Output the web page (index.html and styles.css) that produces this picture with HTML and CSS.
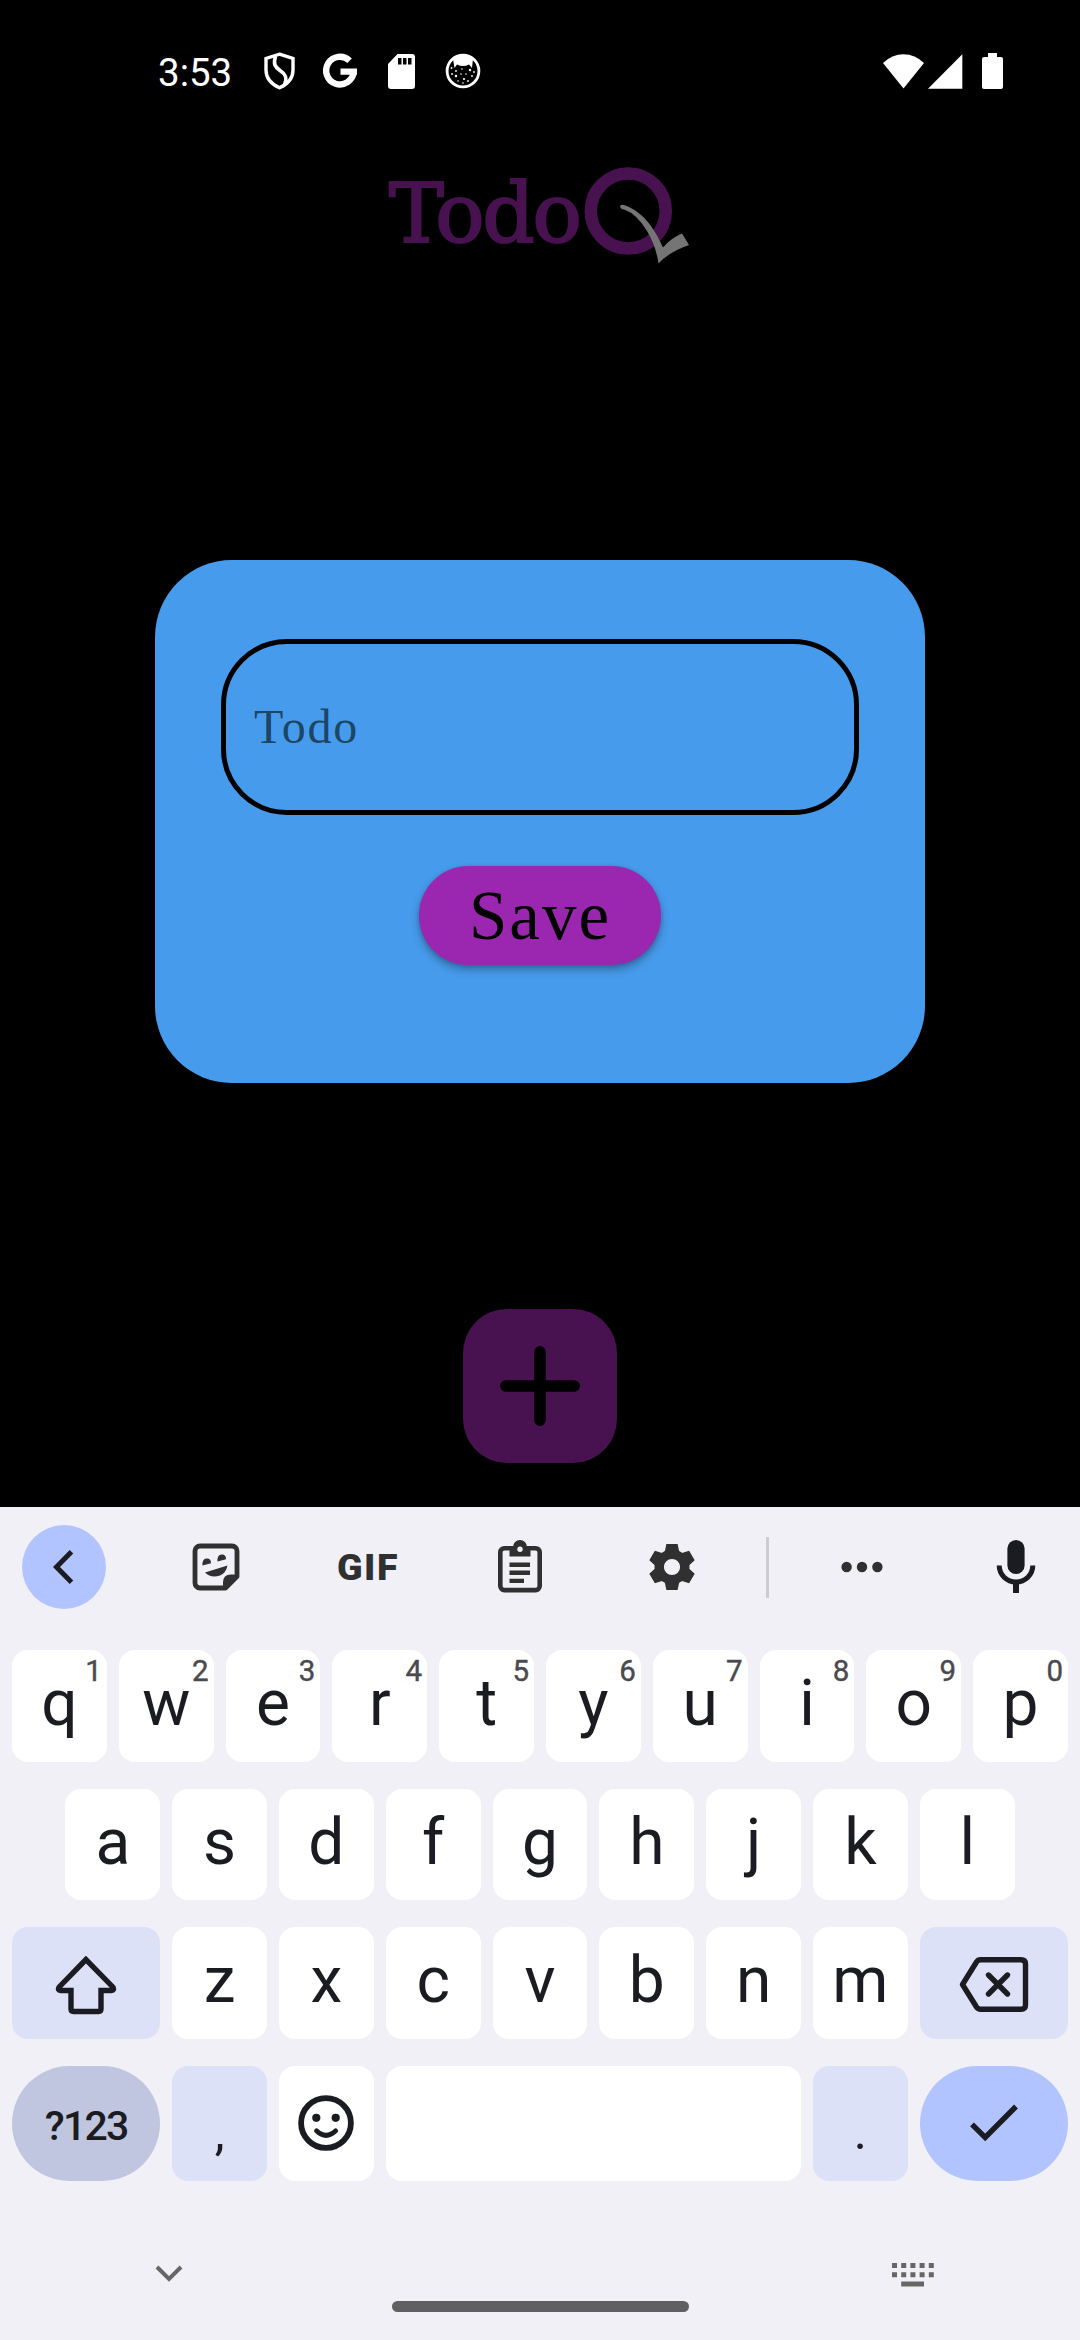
FILE: index.html
```html
<!DOCTYPE html>
<html lang="en">
<head>
<meta charset="utf-8">
<title>TodoQ</title>
<link rel="stylesheet" href="styles.css">
</head>
<body>
<div class="status">
  <span class="clock">3:53</span>
  <div class="notices">
    <svg width="31" height="38" viewBox="0 0 31 38" fill="none" stroke="#fff" stroke-width="3.4"><path d="M15.5 2.2 29 6.5V18c0 7.500-5 14-13.500 17.800C7 32 2 25.500 2 18V6.500Z"/><path d="M11.500 4.500C9 12 11 15 16 18.500c6 4 7.500 8 4.500 14" stroke-width="3.600"/></svg>
    <svg width="34" height="36" viewBox="0 0 34 36" fill="none" stroke="#fff" stroke-width="6.400"><path d="M26.600 7.700A13.800 13.800 0 1 0 30.700 18.800M34 18.600H17.500"/></svg>
    <svg width="27" height="35" viewBox="0 0 27 35"><path fill="#fff" d="M9.500 0H24a3 3 0 0 1 3 3v29a3 3 0 0 1-3 3H3a3 3 0 0 1-3-3V10Z"/><path d="M10 4h3.500v6.500H10zM15 4h3.500v6.500H15zM20 4h3.500v6.500H20z"/></svg>
    <svg width="36" height="36" viewBox="0 0 36 36"><circle cx="18" cy="18" r="15.900" fill="none" stroke="#fff" stroke-width="2.800"/><path fill="#fff" d="M8 6Q18-1 28 6L27 15 24 11.500Q18 14.500 12 11.500L9.500 15Z"/><g fill="#fff"><circle cx="6.500" cy="15" r=".9"/><circle cx="11" cy="18" r=".9"/><circle cx="17" cy="16" r=".8"/><circle cx="25" cy="17" r="1.200"/><circle cx="29" cy="19" r=".9"/><circle cx="7" cy="21" r=".9"/><circle cx="11" cy="23" r="1.200"/><circle cx="16" cy="21" r=".8"/><circle cx="21" cy="21" r=".8"/><circle cx="27" cy="23" r=".9"/><circle cx="19" cy="26" r="1.100"/><circle cx="13" cy="28" r=".8"/><circle cx="23" cy="28" r=".9"/><circle cx="18" cy="30" r=".8"/></g></svg>
  </div>
  <div class="signals">
    <svg width="41" height="35" viewBox="0 0 41 35" fill="#fff"><path d="M0 9Q9 .2 20.500.2T41 9L20.500 34.500Z"/></svg>
    <svg width="35" height="35" viewBox="0 0 35 35" fill="#fff"><path d="M0 34.700 34.300.3V34.700Z"/></svg>
    <svg class="battery" width="21" height="36" viewBox="0 0 21 36" fill="#fff"><path d="M6 0h9v4h4a2 2 0 0 1 2 2v28a2 2 0 0 1-2 2H2a2 2 0 0 1-2-2V6a2 2 0 0 1 2-2h4Z"/></svg>
  </div>
</div>

<main class="app">
  <h1 class="logo"><span class="logo-text">Todo</span><svg width="108" height="100" viewBox="0 0 108 100" aria-label="Q"><circle cx="45.300" cy="45" r="37.500" fill="none" stroke="#48114f" stroke-width="12.600"/><path fill="#757575" d="M37 40.500C37.500 38.200 40 38.400 42.500 39.500C62 47 73 65.500 80 81.500Q88 72 99 67.500L106 79Q86 86 75.500 97.500Q73 80 64 65Q54 48 41 43.500Q38 43.500 37 40.500Z"/></svg></h1>

  <section class="dialog">
    <div class="field">Todo</div>
    <button class="save">Save</button>
  </section>

  <button class="add" aria-label="Add"><svg width="80" height="80" viewBox="0 0 80 80" stroke="#000" stroke-width="11.600" stroke-linecap="round"><path d="M40 5.800V74.200M5.800 40H74.200"/></svg></button>
</main>

<section class="keyboard">
  <div class="tools">
    <span class="back"><svg width="24" height="34" viewBox="0 0 24 34" fill="none" stroke="#1b1c21" stroke-width="5"><path d="M19.500 1.800 4.500 17 19.500 32.200"/></svg></span>
    <svg width="48" height="48" viewBox="0 0 48 48"><path fill="none" stroke="#303030" stroke-width="4.800" stroke-linejoin="round" d="M33.500 45H8a5 5 0 0 1-5-5V8a5 5 0 0 1 5-5H40a5 5 0 0 1 5 5V33.500Z"/><path fill="#303030" d="M31 46V39.500Q31 31.500 39 31.500H46V34L34 46.500ZM10.500 22.500Q10 16 14.500 15.600T19 20.200ZM25.500 18.500Q25 12 29.500 11.600T34 16.200ZM13 29.500 35.500 22.500Q34 30 28 32.500Q19 35.500 13 29.500Z"/></svg>
    <span class="gif">GIF</span>
    <svg width="44" height="52" viewBox="0 0 44 52"><rect x="2.300" y="7.300" width="39.400" height="41.800" rx="4" fill="none" stroke="#303030" stroke-width="4.600"/><path fill="#303030" d="M11.500 6H15a7 7 0 0 1 14 0H32.500V15.500H11.500ZM11.500 21.500H32v4.400H11.500ZM11.500 29.500H32v4.400H11.500ZM11.500 37.700H26v4.400H11.500Z"/><circle cx="22" cy="8.200" r="2.700" fill="#f1f0f7"/></svg>
    <svg width="48" height="48" viewBox="-24 -24 48 48" fill="#303030"><circle r="12.800" fill="none" stroke="#303030" stroke-width="9.400"/><path id="tooth" d="M-7.500-14-5.600-23H5.600L7.500-14ZM-7.500 14-5.600 23H5.600L7.500 14Z"/><use href="#tooth" transform="rotate(60)"/><use href="#tooth" transform="rotate(120)"/></svg>
    <i class="divider"></i>
    <svg width="42" height="12" viewBox="0 0 42 12" fill="#303030"><circle cx="5.600" cy="6" r="5.200"/><circle cx="21" cy="6" r="5.200"/><circle cx="36.400" cy="6" r="5.200"/></svg>
    <svg class="mic" width="40" height="54" viewBox="0 0 40 54"><rect x="11.400" y="0" width="17.200" height="34" rx="8.600" fill="#1b1c21"/><path fill="none" stroke="#1b1c21" stroke-width="5" d="M3.200 25.500a16.800 16.500 0 0 0 33.600 0"/><path stroke="#1b1c21" stroke-width="6" d="M20 42V53"/></svg>
  </div>
  <div class="keys">
    <div class="row"><span class="key">q<sup>1</sup></span><span class="key">w<sup>2</sup></span><span class="key">e<sup>3</sup></span><span class="key">r<sup>4</sup></span><span class="key">t<sup>5</sup></span><span class="key">y<sup>6</sup></span><span class="key">u<sup>7</sup></span><span class="key">i<sup>8</sup></span><span class="key">o<sup>9</sup></span><span class="key">p<sup>0</sup></span></div>
    <div class="row"><span class="key">a</span><span class="key">s</span><span class="key">d</span><span class="key">f</span><span class="key">g</span><span class="key">h</span><span class="key">j</span><span class="key">k</span><span class="key">l</span></div>
    <div class="row">
      <span class="key wide tint"><svg width="62" height="60" viewBox="0 0 62 60" fill="none" stroke="#1b1c21" stroke-width="5.400"><path d="M31 4.500 4 32.200Q2.500 35.500 5.500 35.500H16V54Q16 56.500 18.500 56.500H43.500Q46 56.500 46 54V35.500H56.500Q59.500 35.500 58 32.200Z"/></svg></span>
      <span class="key">z</span><span class="key">x</span><span class="key">c</span><span class="key">v</span><span class="key">b</span><span class="key">n</span><span class="key">m</span>
      <span class="key wide tint"><svg width="70" height="55" viewBox="0 0 70 55" fill="none" stroke="#1b1c21" stroke-width="5.400" stroke-linejoin="round"><path d="M3.500 27.500 17.500 5Q19 2.800 21.500 2.800H62Q66.500 2.800 66.500 7V48Q66.500 52.200 62 52.200H21.500Q19 52.200 17.500 50Z"/><path stroke-linecap="round" d="M29.500 18 48.500 37M48.500 18 29.500 37"/></svg></span>
    </div>
    <div class="row last">
      <span class="key wide mode">?123</span>
      <span class="key tint punct">,</span>
      <span class="key emoji"><svg width="56" height="56" viewBox="-28 -28 56 56" fill="none" stroke="#1b1c21" stroke-width="5.800"><circle r="24.900"/><path stroke-width="4.800" stroke-linecap="round" d="M-9.500 7.800Q0 17 9.700 7.800"/><g fill="#1b1c21" stroke="none"><circle cx="-9.700" cy="-5.200" r="4.100"/><circle cx="9.700" cy="-5.200" r="4.100"/></g></svg></span>
      <span class="key space"></span>
      <span class="key tint punct">.</span>
      <span class="key wide enter"><svg width="50" height="38" viewBox="0 0 50 38" fill="none" stroke="#1b1c21" stroke-width="5.400"><path d="M3 20.300 16.200 33.500 47 2.500"/></svg></span>
    </div>
  </div>
  <div class="nav">
    <svg width="28" height="18" viewBox="0 0 28 18" fill="none" stroke="#666" stroke-width="4"><path d="M2 2 14 14 26 2"/></svg>
    <i class="home"></i>
    <svg width="42" height="24" viewBox="0 0 42 24" stroke="#666" stroke-width="5"><path stroke-dasharray="5 4.200" d="M0 2.500H42M0 11.700H42"/><path d="M9.200 21H32"/></svg>
  </div>
</section>
</body>
</html>
```
FILE: styles.css
```css
* { box-sizing: border-box; }
body {
  margin: 0;
  width: 1080px;
  height: 2340px;
  background: #000;
  display: flex;
  flex-direction: column;
  font-family: Roboto, "Liberation Sans", sans-serif;
  overflow: hidden;
}
svg { display: block; flex: none; overflow: visible; }
button { border: 0; padding: 0; font: inherit; color: inherit; }

.status {
  height: 142px;
  padding: 0 77px 0 158px;
  display: flex;
  align-items: center;
  color: #fff;
}
.clock { width: 106px; font-size: 38.5px; line-height: 46px; padding-top: 3px; }
.notices { display: flex; align-items: center; gap: 30px; }
.notices svg:first-child { margin-right: -2px; }
.notices svg:nth-child(3) { margin-left: 1px; }
.signals { display: flex; align-items: center; margin-left: auto; gap: 4px; }
.battery { margin-left: 15px; }

.app {
  height: 1365px;
  display: flex;
  flex-direction: column;
  align-items: center;
}
.logo {
  margin: 24px 0 0;
  height: 100px;
  width: 302px;
  display: flex;
  font-weight: 400;
}
.logo-text {
  width: 194px;
  font: 82px/95px "DejaVu Serif", serif;
  letter-spacing: -2.2px;
  color: #48114f;
  -webkit-text-stroke: 2.2px #48114f;
  white-space: nowrap;
}
.dialog {
  margin-top: 294px;
  width: 770px;
  height: 523px;
  border-radius: 77px;
  background: #479bec;
  padding: 79px 66px 0;
  display: flex;
  flex-direction: column;
  align-items: center;
  font-family: "Liberation Serif", serif;
}
.field {
  width: 638px;
  height: 176px;
  border: 5.6px solid #000;
  border-radius: 66px;
  padding: 0 0 1px 28px;
  display: flex;
  align-items: center;
  font-size: 48px;
  letter-spacing: 1.8px;
  color: #1c4566;
}
.save {
  margin-top: 51px;
  width: 242px;
  height: 99px;
  border-radius: 50px;
  background: #9b27b0;
  color: #000;
  font-size: 69px;
  line-height: 99px;
  letter-spacing: 2px;
  padding-top: 1px;
  box-shadow: 0 5px 8px rgba(0, 0, 0, .28), 0 1px 4px rgba(0, 0, 0, .15);
}
.add {
  margin-top: 226px;
  width: 154px;
  height: 154px;
  border-radius: 44px;
  background: #48114f;
  display: grid;
  place-items: center;
}

.keyboard { height: 833px; background: #f1f0f7; color: #1b1c21; }
.tools {
  height: 143px;
  padding: 0 0 23px 22px;
  display: grid;
  grid-template-columns: 118px repeat(4, 152px) 39px 149px 1fr;
  align-items: center;
  justify-items: center;
}
.back {
  width: 84px;
  height: 84px;
  border-radius: 50%;
  background: #b2c4ff;
  display: grid;
  place-items: center;
  justify-self: start;
}
.gif { font-weight: 900; font-size: 37.5px; letter-spacing: 1.5px; color: #303030; }
.divider { width: 3px; height: 61px; background: #ccccd3; }
.mic { margin-left: 16px; }

.keys { display: flex; flex-direction: column; gap: 27px; padding: 0 12px; }
.row { display: flex; justify-content: center; gap: 12px; height: 111.6px; }
.row.last { height: 115px; }
.key {
  position: relative;
  width: 94.8px;
  border-radius: 16px;
  background: #fff;
  display: flex;
  align-items: center;
  justify-content: center;
  font-size: 64px;
  padding-bottom: 4px;
}
.key sup {
  position: absolute;
  top: 6px;
  right: 5px;
  font-size: 29.5px;
  line-height: 30px;
  color: #494a4f;
  -webkit-text-stroke: .4px #494a4f;
}
.wide { width: 148.2px; padding-bottom: 0; }
.tint { background: #dde1f8; }
.wide.tint { padding-top: 4px; }
.space { width: 415.2px; }
.emoji { padding-bottom: 0; }
.mode {
  border-radius: 58px;
  background: #c0c6df;
  font-size: 41px;
  font-weight: 500;
  letter-spacing: -1.8px;
  padding-top: 5px;
}
.punct { font-size: 50px; padding: 18px 0 0; }
.enter { border-radius: 58px; background: #b2c4ff; }

.nav {
  height: 158px;
  padding: 0 146px 0 155px;
  display: flex;
  justify-content: space-between;
  align-items: flex-start;
}
.nav svg { margin-top: 84px; }
.nav svg:last-child { margin-top: 82px; }
.home {
  width: 297px;
  height: 11px;
  border-radius: 6px;
  background: #606062;
  margin: 120px 0 0 5px;
}
```
